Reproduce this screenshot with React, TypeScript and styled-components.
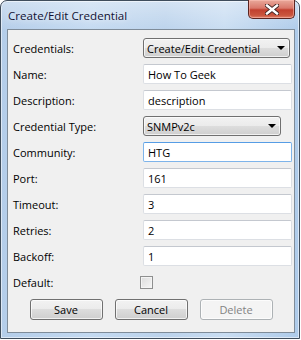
import styled, { createGlobalStyle } from 'styled-components';

const GlobalStyle = createGlobalStyle`
  html, body {
    margin: 0;
    padding: 0;
    background: #ffffff;
  }
  body {
    font-family: "Open Sans", "Noto Sans", "DejaVu Sans", sans-serif;
  }
`;

const Window = styled.div`
  box-sizing: border-box;
  width: 300px;
  height: 339px;
  display: flex;
  flex-direction: column;
  border: 1px solid #3f4d5c;
  border-radius: 7px 7px 0 0;
  padding: 0 4px 5px 6px;
  background:
    linear-gradient(180deg, rgba(255, 255, 255, 0.35) 0%, rgba(255, 255, 255, 0) 30px),
    linear-gradient(90deg, #b4cde9 0%, #c4daf1 30%, #bcd3ec 55%, #c9ddf2 75%, #aecbea 100%);
  box-shadow: inset 0 0 0 1px rgba(255, 255, 255, 0.55);
`;

const TitleBar = styled.div`
  height: 28px;
  display: flex;
  align-items: flex-start;
  justify-content: space-between;
`;

const Title = styled.span`
  margin-top: 7px;
  margin-left: 1px;
  font-size: 11.6px;
  color: #111133;
  text-shadow: 0 0 6px rgba(255, 255, 255, 0.9);
`;

const CloseButton = styled.div`
  box-sizing: border-box;
  width: 47px;
  height: 19px;
  margin-top: -1px;
  display: flex;
  align-items: center;
  justify-content: center;
  border: 1px solid #5a2420;
  border-top: none;
  border-radius: 0 0 5px 5px;
  background: linear-gradient(180deg, #e9a99b 0%, #d9786b 45%, #c2402f 55%, #c9553e 85%, #e0806a 100%);
  box-shadow: inset 0 0 0 1px rgba(255, 200, 190, 0.5);
`;

const Client = styled.div`
  flex: 1;
  display: flex;
  flex-direction: column;
  gap: 6px;
  border: 1px solid #7f8c99;
  background: #f0f0f0;
  padding: 8px 2px 0 5px;
  font-size: 11px;
  color: #000;
`;

const Row = styled.div`
  height: 20px;
  display: grid;
  grid-template-columns: 130px 1fr;
  align-items: center;
`;

const Label = styled.span`
  white-space: nowrap;
`;

const TextInput = styled.div<{ $focused?: boolean }>`
  box-sizing: border-box;
  height: 20px;
  display: flex;
  align-items: center;
  padding-left: 4px;
  background: #fff;
  border: 1px solid ${(p) => (p.$focused ? '#7eb4ea' : '#dcdfe4')};
  border-top-color: ${(p) => (p.$focused ? '#569de5' : '#c4c8cf')};
  border-radius: 2px;
`;

const Select = styled.div<{ $width: number }>`
  box-sizing: border-box;
  width: ${(p) => p.$width}px;
  height: 20px;
  display: flex;
  align-items: center;
  justify-content: space-between;
  padding: 0 4px 0 3px;
  border: 1px solid #707070;
  border-radius: 3px;
  background: linear-gradient(180deg, #f2f2f2 0%, #ebebeb 50%, #dddddd 50%, #cfcfcf 100%);
  box-shadow: inset 0 0 0 1px rgba(255, 255, 255, 0.7);
`;

const Arrow = styled.span`
  width: 0;
  height: 0;
  border-left: 4px solid transparent;
  border-right: 4px solid transparent;
  border-top: 4px solid #000;
`;

const CheckBox = styled.span`
  box-sizing: border-box;
  width: 13px;
  height: 13px;
  margin-left: -3px;
  border: 1px solid #8e8f8f;
  background: linear-gradient(135deg, #dcdcdc 0%, #f6f6f6 100%);
  box-shadow: inset 0 0 0 1px #f4f4f4;
`;

const ButtonRow = styled.div`
  margin-top: 1px;
  display: flex;
  justify-content: center;
  gap: 12px;
  padding-right: 3px;
`;

const Button = styled.div<{ $disabled?: boolean }>`
  box-sizing: border-box;
  width: 73px;
  height: 21px;
  display: flex;
  align-items: center;
  justify-content: center;
  border-radius: 3px;
  border: 1px solid ${(p) => (p.$disabled ? '#adb2b5' : '#707070')};
  color: ${(p) => (p.$disabled ? '#838383' : '#000')};
  background: ${(p) =>
    p.$disabled
      ? '#f4f4f4'
      : 'linear-gradient(180deg, #f2f2f2 0%, #ebebeb 50%, #dddddd 50%, #cfcfcf 100%)'};
  box-shadow: inset 0 0 0 1px rgba(255, 255, 255, 0.7);
`;

const fields = [
  { label: 'Community:', value: 'HTG', focused: true },
  { label: 'Port:', value: '161' },
  { label: 'Timeout:', value: '3' },
  { label: 'Retries:', value: '2' },
  { label: 'Backoff:', value: '1' },
];

export default function App() {
  return (
    <>
      <GlobalStyle />
      <Window>
        <TitleBar>
          <Title>Create/Edit Credential</Title>
          <CloseButton>
            <svg width="14" height="11" viewBox="0 0 14 11">
              <path
                d="M2 1.5 L12 9.5 M12 1.5 L2 9.5"
                stroke="#3a2020"
                strokeWidth="4.2"
                strokeLinecap="square"
              />
              <path
                d="M2 1.5 L12 9.5 M12 1.5 L2 9.5"
                stroke="#ffffff"
                strokeWidth="2.4"
                strokeLinecap="square"
              />
            </svg>
          </CloseButton>
        </TitleBar>
        <Client>
          <Row>
            <Label>Credentials:</Label>
            <Select $width={147}>
              <span>Create/Edit Credential</span>
              <Arrow />
            </Select>
          </Row>
          <Row>
            <Label>Name:</Label>
            <TextInput>How To Geek</TextInput>
          </Row>
          <Row>
            <Label>Description:</Label>
            <TextInput>description</TextInput>
          </Row>
          <Row>
            <Label>Credential Type:</Label>
            <Select $width={138}>
              <span>SNMPv2c</span>
              <Arrow />
            </Select>
          </Row>
          {fields.map((f) => (
            <Row key={f.label}>
              <Label>{f.label}</Label>
              <TextInput $focused={f.focused}>{f.value}</TextInput>
            </Row>
          ))}
          <Row>
            <Label>Default:</Label>
            <CheckBox />
          </Row>
          <ButtonRow>
            <Button>Save</Button>
            <Button>Cancel</Button>
            <Button $disabled>Delete</Button>
          </ButtonRow>
        </Client>
      </Window>
    </>
  );
}
